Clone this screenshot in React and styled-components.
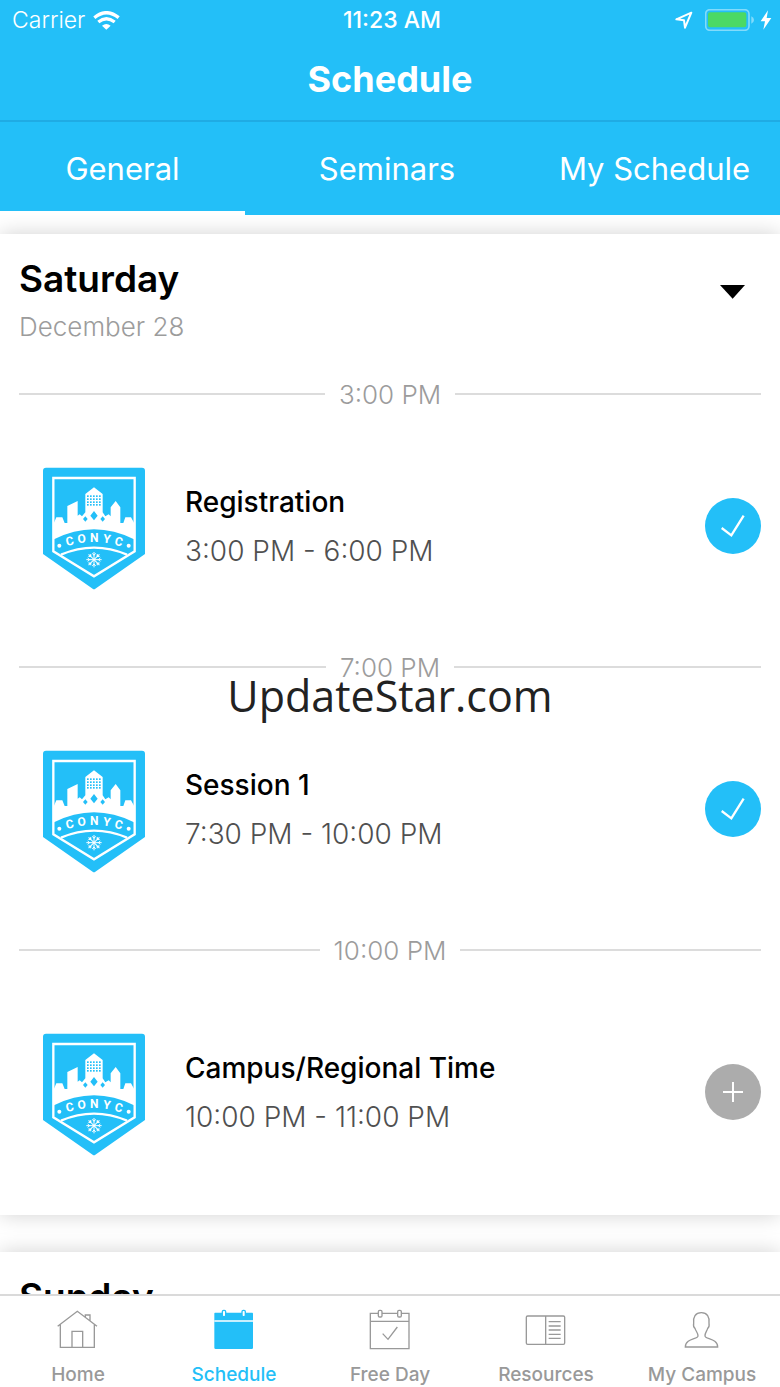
import React from "react";
import styled, { createGlobalStyle, css } from "styled-components";

const BLUE = "#23bff8";
const GREY = "#acacac";

const GlobalStyle = createGlobalStyle`
  * { box-sizing: border-box; }
  body { margin: 0; background: #fff; }
  button { font: inherit; color: inherit; border: 0; padding: 0; background: none; cursor: pointer; }
  h1, h2, h3, p { margin: 0; }
  svg { display: block; flex: none; }
`;

const Screen = styled.div`
  position: relative;
  display: flex;
  flex-direction: column;
  height: 100vh;
  overflow: hidden;
  font-family: Inter, "Liberation Sans", sans-serif;
  color: #000;
`;

const Header = styled.header`
  flex: none;
  background: ${BLUE};
  color: #fff;
`;

const StatusBar = styled.div`
  display: grid;
  grid-template-columns: 1fr auto 1fr;
  align-items: center;
  height: 40px;
  padding: 0 8px 0 12px;
`;

const Carrier = styled.div`
  display: flex;
  align-items: center;
  gap: 8px;
  font-size: 23px;
  font-weight: 300;
`;

const Clock = styled.time`
  font-size: 23px;
  font-weight: 500;
`;

const Indicators = styled.div`
  display: flex;
  align-items: center;
  justify-content: flex-end;
  gap: 12px;
`;

const Power = styled.div`
  display: flex;
  align-items: center;
  gap: 6px;
`;

const PageTitle = styled.h1`
  height: 82px;
  padding-top: 16px;
  border-bottom: 2px solid #1fabe4;
  font-size: 36px;
  line-height: 46px;
  font-weight: 700;
  text-align: center;
`;

const Tabs = styled.nav`
  display: grid;
  grid-template-columns: 245fr 284fr 251fr;
`;

const Tab = styled.button`
  height: 93px;
  padding-top: 4px;
  border-bottom: 4px solid ${(p) => (p.$active ? "#fff" : "transparent")};
  font-size: 31px;
  line-height: 40px;
`;

const Content = styled.main`
  flex: 1;
  min-height: 0;
  overflow-y: auto;
  scrollbar-width: none;
  display: flex;
  flex-direction: column;
  gap: 37px;
  padding-top: 19px;
`;

const DayCard = styled.section`
  flex: none;
  background: #fff;
  box-shadow: 0 0 20px rgba(0, 0, 0, 0.18);
`;

const DayHeader = styled.div`
  display: flex;
  align-items: center;
  justify-content: space-between;
  height: 142px;
  padding: 0 35px 4px 19px;
`;

const DayName = styled.h2`
  font-size: 37px;
  line-height: 48px;
  font-weight: 600;
`;

const DayDate = styled.p`
  font-size: 26px;
  line-height: 48px;
  font-weight: 300;
  color: #9c9c9c;
`;

const Collapse = styled.button`
  padding: 0 0 22px;
`;

const Item = styled.article`
  display: flex;
  align-items: center;
  padding: 60px 19px 59px 43px;
`;

const Slot = styled.div`
  &:first-of-type ${Item} {
    padding-top: 50px;
  }
`;

const TimeDivider = styled.div`
  display: flex;
  align-items: center;
  gap: 14px;
  height: 36px;
  padding: 0 19px;
  font-size: 26px;
  font-weight: 300;
  color: #9c9c9c;

  &::before,
  &::after {
    content: "";
    flex: 1;
    height: 2px;
    background: #dcdcdc;
  }
`;

const ItemText = styled.div`
  flex: 1;
  display: flex;
  flex-direction: column;
  gap: 15px;
  padding-left: 40px;
  line-height: 34px;
`;

const ItemTitle = styled.h3`
  font-size: 28px;
  font-weight: 500;
`;

const ItemTime = styled.p`
  font-size: 28px;
  font-weight: 300;
  color: #505050;
`;

const RoundButton = styled.button`
  display: grid;
  place-items: center;
  width: 56px;
  height: 56px;
  border-radius: 50%;
  background: ${(p) => (p.$added ? BLUE : GREY)};
`;

const TabBar = styled.nav`
  position: relative;
  flex: none;
  display: grid;
  grid-template-columns: repeat(5, 1fr);
  height: 93px;
  padding-top: 13px;
  border-top: 2px solid #dadada;
  background: #fff;
`;

const BarLink = styled.a`
  display: flex;
  flex-direction: column;
  align-items: center;
  gap: 12px;
  font-size: 19px;
  line-height: 24px;
  font-weight: 500;
  text-decoration: none;
  color: #999;
  ${(p) =>
    p.$active &&
    css`
      color: ${BLUE};
    `}
`;

const Watermark = styled.div`
  position: absolute;
  inset: 0;
  display: grid;
  place-items: center;
  padding-top: 4px;
  font-family: "Open Sans", "Noto Sans", sans-serif;
  font-size: 43px;
  line-height: 60px;
  color: #222;
  pointer-events: none;
`;

const WifiIcon = () => (
  <svg width="27" height="19" viewBox="0 0 81 57" fill="none" stroke="#fff" strokeWidth="10">
    <path d="M4 20Q40-10 77 20" />
    <path d="M16 33Q40 14 65 33" />
    <path d="M40 56L27 44Q40 34 53 44Z" fill="#fff" stroke="none" />
  </svg>
);

const LocationIcon = () => (
  <svg width="18" height="18" viewBox="0 0 54 54" fill="none" stroke="#fff" strokeWidth="6" strokeLinejoin="round">
    <path d="M49 5L4 25L27 28L30 50Z" />
  </svg>
);

const BatteryIcon = () => (
  <svg width="49" height="22" viewBox="0 0 147 66">
    <rect x="2" y="2" width="130" height="62" rx="13" fill="none" stroke="#82dbfb" strokeWidth="5" />
    <rect x="9" y="10" width="115" height="45" rx="7" fill="#4bd964" />
    <path d="M139 22Q147 26 147 33T139 44Z" fill="#82dbfb" />
  </svg>
);

const BoltIcon = () => (
  <svg width="12" height="20" viewBox="0 0 36 60" fill="#fff">
    <path d="M24 1L2 34H15L10 59L34 24H20Z" />
  </svg>
);

const CaretIcon = () => (
  <svg width="25" height="14" viewBox="0 0 75 42">
    <path d="M0 0H75L38 41Z" />
  </svg>
);

const CheckIcon = () => (
  <svg width="24" height="24" viewBox="0 0 72 72" fill="none" stroke="#fff" strokeWidth="7">
    <path d="M2 42L31 64L68 5" />
  </svg>
);

const PlusIcon = () => (
  <svg width="20" height="20" viewBox="0 0 20 20" stroke="#fff" strokeWidth="2">
    <path d="M0 10H20M10 0V20" />
  </svg>
);

const LETTERS = [
  ["C", 119, 259, -13],
  ["O", 155, 251, -7],
  ["N", 193, 249, 0],
  ["Y", 231, 252, 7],
  ["C", 266, 260, 13],
];

const Badge = () => (
  <svg width="102" height="128" viewBox="39 21 306 384" role="img" aria-label="CONYC">
    <path d="M48 38H336Q345 38 345 47V297L196 401Q192 404 188 401L39 297V47Q39 38 48 38Z" fill={BLUE} />
    <path d="M70 69H314V289L192 364L70 289Z" fill="none" stroke="#fff" strokeWidth="7" />
    <path
      d="M72 203L79 187H97L104 204H112V153L143 138V182L149 178L156 184L166 172V117L192 97L218 117V172L226 184L236 178L242 184V157L257 138L271 157V204H280L286 187H303L312 203V253Q192 193 72 253Z"
      fill="#fff"
    />
    <g fill={BLUE}>
      {[123, 132, 141, 149].map((y) =>
        [174, 183, 192, 201, 210].map((x) => <rect key={`${x}-${y}`} x={x - 3} y={y - 2} width="5" height="5" />)
      )}
      <path d="M192 168L203 182L192 196L181 182ZM166 184L173 192L166 200L159 192ZM218 184L225 192L218 200L211 192Z" />
    </g>
    <path d="M93 299Q192 257 291 299" fill="none" stroke="#fff" strokeWidth="7" />
    <circle cx="88" cy="272" r="6" fill="#fff" />
    <circle cx="296" cy="272" r="6" fill="#fff" />
    <g fill="#fff" fontFamily="Roboto, sans-serif" fontWeight="700" fontSize="36" textAnchor="middle">
      {LETTERS.map(([letter, x, y, turn]) => (
        <text key={x} transform={`translate(${x} ${y}) rotate(${turn})`} y="12">
          {letter}
        </text>
      ))}
    </g>
    <g fill="none" stroke="#fff" strokeWidth="3">
      {[0, 45, 90, 135, 180, 225, 270, 315].map((turn) => (
        <path key={turn} transform={`rotate(${turn} 192 314)`} d="M192 314V291M187 295L192 301L197 295" />
      ))}
    </g>
  </svg>
);

const BarSvg = ({ children }) => (
  <svg width="42" height="42" viewBox="2 0 126 126" fill="none" stroke="currentColor" strokeWidth="4" aria-hidden="true">
    {children}
  </svg>
);

const HomeIcon = () => (
  <BarSvg>
    <path d="M4 52L63 7L122 52M12 46V115H114V46M47 115V67H79V115M87 24V18H101V36" />
  </BarSvg>
);

const CalendarFilledIcon = () => (
  <BarSvg>
    <path d="M8 11H120Q122 11 122 14V116Q122 120 118 120H10Q6 120 6 116V14Q6 11 8 11Z" fill="currentColor" stroke="none" />
    <path d="M6 36H122" stroke="#fff" strokeWidth="5" />
    <rect x="30" y="4" width="10" height="19" rx="4" fill="#fff" />
    <rect x="89" y="4" width="10" height="19" rx="4" fill="#fff" />
  </BarSvg>
);

const CalendarCheckIcon = () => (
  <BarSvg>
    <path d="M30 13H6V119H122V13H98M41 13H87M6 37H122M43 74L59 91L87 54" />
    <rect x="30" y="4" width="11" height="20" rx="4" />
    <rect x="88" y="4" width="11" height="20" rx="4" />
  </BarSvg>
);

const ResourcesIcon = () => (
  <BarSvg>
    <rect x="6" y="21" width="115" height="85" rx="4" />
    <path d="M64 21V106M73 38H109M73 51H109M73 63H109M73 76H109M73 88H109" />
  </BarSvg>
);

const PersonIcon = () => (
  <BarSvg>
    <path d="M63 11C45 11 38 24 40 42Q38 54 44 58C46 66 53 71 53 81C53 91 15 88 15 114H112C112 88 74 91 74 81C74 71 80 66 82 58Q88 54 86 42C88 24 81 11 63 11Z" />
  </BarSvg>
);

const SLOTS = [
  { at: "3:00 PM", title: "Registration", time: "3:00 PM - 6:00 PM", added: true },
  { at: "7:00 PM", title: "Session 1", time: "7:30 PM - 10:00 PM", added: true },
  { at: "10:00 PM", title: "Campus/Regional Time", time: "10:00 PM - 11:00 PM", added: false },
];

const BAR = [
  ["Home", HomeIcon],
  ["Schedule", CalendarFilledIcon],
  ["Free Day", CalendarCheckIcon],
  ["Resources", ResourcesIcon],
  ["My Campus", PersonIcon],
];

const Day = ({ name, date, children }) => (
  <DayCard>
    <DayHeader>
      <div>
        <DayName>{name}</DayName>
        {date && <DayDate>{date}</DayDate>}
      </div>
      <Collapse aria-label={`Collapse ${name}`}>
        <CaretIcon />
      </Collapse>
    </DayHeader>
    <div>{children}</div>
  </DayCard>
);

export default function App() {
  return (
    <Screen>
      <GlobalStyle />
      <Header>
        <StatusBar>
          <Carrier>
            <span>Carrier</span>
            <WifiIcon />
          </Carrier>
          <Clock>11:23 AM</Clock>
          <Indicators>
            <LocationIcon />
            <Power>
              <BatteryIcon />
              <BoltIcon />
            </Power>
          </Indicators>
        </StatusBar>
        <PageTitle>Schedule</PageTitle>
        <Tabs>
          <Tab $active>General</Tab>
          <Tab>Seminars</Tab>
          <Tab>My Schedule</Tab>
        </Tabs>
      </Header>
      <Content>
        <Day name="Saturday" date="December 28">
          {SLOTS.map((slot) => (
            <Slot key={slot.at}>
              <TimeDivider>{slot.at}</TimeDivider>
              <Item>
                <Badge />
                <ItemText>
                  <ItemTitle>{slot.title}</ItemTitle>
                  <ItemTime>{slot.time}</ItemTime>
                </ItemText>
                <RoundButton $added={slot.added} aria-label={slot.added ? "Remove from my schedule" : "Add to my schedule"}>
                  {slot.added ? <CheckIcon /> : <PlusIcon />}
                </RoundButton>
              </Item>
            </Slot>
          ))}
        </Day>
        <Day name="Sunday" date="December 29" />
      </Content>
      <TabBar>
        {BAR.map(([label, Icon]) => (
          <BarLink key={label} href="#" $active={label === "Schedule"}>
            <Icon />
            {label}
          </BarLink>
        ))}
      </TabBar>
      <Watermark>UpdateStar.com</Watermark>
    </Screen>
  );
}
